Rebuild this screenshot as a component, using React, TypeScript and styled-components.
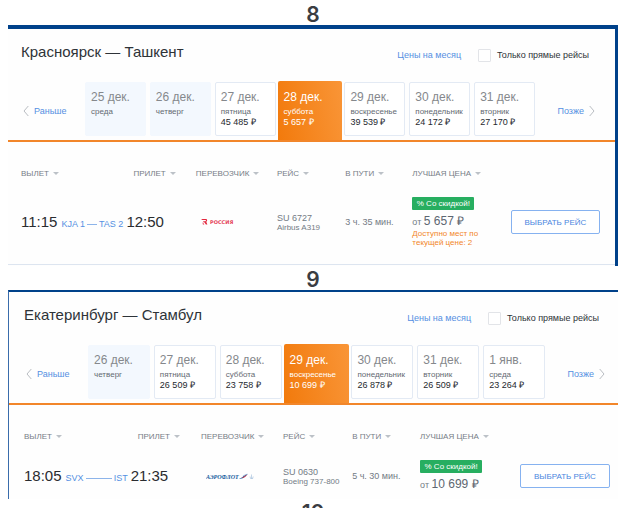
import React from "react";
import styled, { createGlobalStyle, css } from "styled-components";

const GlobalStyle = createGlobalStyle`
  * { box-sizing: border-box; }
  body {
    margin: 0;
    background: #fff;
    font-family: "Liberation Sans", Arial, sans-serif;
    color: #2e3338;
  }
  button { font: inherit; color: inherit; background: none; border: 0; padding: 0; cursor: pointer; }
  a { color: #5590e2; text-decoration: none; }
`;

const Page = styled.main`
  max-height: 100vh;
  overflow: hidden;
  padding: 1px 17px 0 8px;
`;

const Caption = styled.h2`
  margin: 0;
  height: 24px;
  line-height: 28px;
  text-align: center;
  font-family: Inter, sans-serif;
  font-size: 21px;
  font-weight: 600;
  color: #3a3d42;
`;

type Frame = "topRight" | "topLeft";

const Panel = styled.section<{ $frame: Frame }>`
  --start: 13px;
  --end: 15px;
  background: #fefefe;
  border-top: 4px solid #00418a;
  border-right: 3px solid #00418a;
  ${(p) =>
    p.$frame === "topLeft" &&
    css`
      --start: 15px;
      --end: 8px;
      border-top-width: 2px;
      border-right: 0;
      border-left: 1px solid #3a6cab;
    `}
`;

const Header = styled.header`
  display: flex;
  align-items: center;
  height: 52px;
  padding: 0 calc(var(--end) + 11px) 0 var(--start);
`;

const Title = styled.h1`
  flex: 1;
  margin: 0;
  padding-bottom: 6px;
  font-size: 15px;
  line-height: 20px;
  font-weight: 400;
`;

const MonthLink = styled.a`
  font-size: 9px;
  line-height: 14px;
  margin-right: 17px;
`;

const DirectOnly = styled.label`
  display: flex;
  align-items: center;
  gap: 6px;
  font-size: 9px;
  line-height: 14px;
`;

const Checkbox = styled.input`
  appearance: none;
  width: 13px;
  height: 13px;
  margin: 0;
  background: #fff;
  border: 1px solid #e2e4e8;
  border-radius: 1px;
`;

const DateNav = styled.nav`
  display: grid;
  grid-template-columns: 64px 1fr 65px;
  padding: 0 var(--end) 0 var(--start);
  border-bottom: 2px solid #f2862a;
`;

const Step = styled.button<{ $side: "start" | "end" }>`
  display: flex;
  align-items: center;
  justify-content: ${(p) => (p.$side === "start" ? "flex-start" : "flex-end")};
  gap: 5px;
  padding: ${(p) => (p.$side === "start" ? "0 0 0 2px" : "0 5px 0 0")};
  font-size: 9px;
  color: #5590e2;
`;

const Days = styled.div`
  display: flex;
  gap: 4px;
`;

type DayState = "empty" | "priced" | "active";

const dayLook = {
  empty: css`
    background: #f3f8fe;
    border-color: #f3f8fe;
  `,
  priced: css`
    background: #fff;
    border-color: #e3eaf4;
  `,
  active: css`
    flex-basis: 14px;
    height: 59px;
    margin: 0 -2px;
    padding: 8px 0 0 6px;
    color: #fff;
    background: linear-gradient(80deg, #f27a0c, #f99537);
    border-width: 0;
    border-radius: 2px 2px 0 0;
  `,
};

const DayCell = styled.button<{ $state: DayState }>`
  flex: 1 1 10px;
  min-width: 0;
  height: 54px;
  margin-top: 1px;
  margin-bottom: 4px;
  padding: 6px 0 0 5px;
  display: flex;
  flex-direction: column;
  align-items: flex-start;
  text-align: left;
  white-space: nowrap;
  border: 1px solid;
  border-radius: 2px;
  color: #646a72;
  ${(p) => dayLook[p.$state]}
`;

const DayDate = styled.span<{ $active: boolean }>`
  font-size: 12px;
  line-height: 16px;
  color: ${(p) => (p.$active ? "#fff" : "#85888c")};
`;

const Weekday = styled.span`
  font-size: 8px;
  line-height: 12px;
  margin-top: 1px;
`;

const DayPrice = styled.span<{ $active: boolean }>`
  font-size: 9px;
  line-height: 9px;
  color: ${(p) => (p.$active ? "#fff" : "#25292e")};
`;

const Flights = styled.div`
  padding: 26px var(--end) 0 var(--start);
`;

const Table = styled.table`
  width: 100%;
  table-layout: fixed;
  border-collapse: collapse;
`;

const HeadCell = styled.th<{ $width: string; $indent?: boolean }>`
  width: ${(p) => p.$width};
  height: 11px;
  padding: 0 0 0 ${(p) => (p.$indent ? "7px" : "0")};
  text-align: left;
  font-weight: 400;
  line-height: 11px;
`;

const SortButton = styled.button`
  display: flex;
  align-items: center;
  gap: 4px;
  font-size: 8px;
  line-height: 11px;
  color: #767d86;
  white-space: nowrap;
`;

const Caret = styled.span`
  border: solid transparent;
  border-width: 3px 3px 0;
  border-top-color: #bcc1c7;
`;

const Cell = styled.td<{ $compact: boolean }>`
  padding: 18px 0 ${(p) => (p.$compact ? "7px" : "17px")};
  vertical-align: middle;
  white-space: nowrap;
  font-size: 9px;
  line-height: 11px;
  color: #737b85;
`;

const Departure = styled.div`
  display: flex;
  align-items: baseline;
  gap: 4px;
  padding-right: 3px;
`;

const Time = styled.time`
  display: block;
  font-size: 15px;
  line-height: 18px;
  color: #2a2c30;
`;

const Route = styled.a`
  flex: 1;
  display: flex;
  align-items: baseline;
  gap: 2px;
`;

const RouteLine = styled.span`
  flex: 1;
  align-self: center;
  height: 1px;
  background: #8db4ea;
`;

const Logo = styled.svg`
  display: block;
  margin-left: 5px;
`;

const Plane = styled.div`
  font-size: 8px;
  line-height: 8px;
`;

const Badge = styled.span`
  display: block;
  width: 62px;
  height: 13px;
  border-radius: 1px;
  background: #27ae60;
  color: #fff;
  font-size: 8px;
  line-height: 13px;
  text-align: center;
`;

const Fare = styled.div`
  margin-top: 4px;
  line-height: 14px;
`;

const Amount = styled.span`
  font-size: 12px;
  color: #5d6671;
`;

const SeatsLeft = styled.div`
  font-size: 8px;
  line-height: 9px;
  color: #f2862a;
`;

const Choose = styled.button`
  display: block;
  width: 100%;
  height: 24px;
  border: 1px solid #86b2f0;
  border-radius: 2px;
  background: #fff;
  color: #4a86e0;
  font-size: 8px;
`;

const BottomRule = styled.div`
  height: 2px;
  border-top: 1px solid #dde5f0;
`;

const Chevron = ({ dir }: { dir: "left" | "right" }) => (
  <svg width="6" height="12" viewBox="0 0 6 12" fill="none" stroke="#b9bdc2" aria-hidden="true">
    <path d={dir === "left" ? "M5.3 1 1 6l4.3 5" : "M.7 1 5 6 .7 11"} />
  </svg>
);

const RossiyaLogo = () => (
  <Logo width="38" height="8" viewBox="0 0 38 8" role="img" aria-label="Россия">
    <path d="M0 1h5.200c1.400.6 1.200 2.200 0 2.800L6.400 6.600H4.900L3.300 4.300H2.200V3.300H4.400c.8-.2.8-1 0-1.200H1.400z" fill="#e3263d" />
    <path d="M1.500 4.300 3.400 6.600H1.900z" fill="#e3263d" />
    <text x="9" y="6" fontSize="5" fontWeight="700" fontFamily="DejaVu Sans" fill="#e5445a">
      РОССИЯ
    </text>
  </Logo>
);

const AeroflotLogo = () => (
  <Logo width="48" height="9" viewBox="0 0 48 9" role="img" aria-label="Аэрофлот">
    <text x="0" y="6.500" fontSize="6" fontWeight="700" fontStyle="italic" fontFamily="Liberation Serif" fill="#20609f">
      АЭРОФЛОТ
    </text>
    <path d="M33 6.500c3-.3 4-1.800 5-3.200l4-1.500-3 3c-2 1.700-3.500 2.200-6 1.700z" fill="#2a66a8" />
    <path d="M35.500 6c2-.8 3.200-2.300 6-3.500L39 5c-1 .8-2.200 1.100-3.500 1z" fill="#e0353f" />
    <path d="M36.500 3.600 41.500 1.500 38 4z" fill="#b9cfe6" />
    <path d="M45.500 2.500v3.500M44 4.500c0 2.500 3.200 2.500 3.200 0M44.300 6.500h2.800" stroke="#a9c3de" strokeWidth=".7" fill="none" />
  </Logo>
);

interface Day {
  date: string;
  weekday: string;
  price?: string;
  active?: boolean;
}

interface Flight {
  departs: string;
  arrives: string;
  from: string;
  to: string;
  logo: React.ReactNode;
  number: string;
  plane: string;
  duration: string;
  price: string;
  seats?: [string, string];
}

interface Search {
  id: string;
  frame: Frame;
  title: string;
  days: Day[];
  flight: Flight;
}

const searches: Search[] = [
  {
    id: "8",
    frame: "topRight",
    title: "Красноярск — Ташкент",
    days: [
      { date: "25 дек.", weekday: "среда" },
      { date: "26 дек.", weekday: "четверг" },
      { date: "27 дек.", weekday: "пятница", price: "45 485 ₽" },
      { date: "28 дек.", weekday: "суббота", price: "5 657 ₽", active: true },
      { date: "29 дек.", weekday: "воскресенье", price: "39 539 ₽" },
      { date: "30 дек.", weekday: "понедельник", price: "24 172 ₽" },
      { date: "31 дек.", weekday: "вторник", price: "27 170 ₽" },
    ],
    flight: {
      departs: "11:15",
      arrives: "12:50",
      from: "KJA 1",
      to: "TAS 2",
      logo: <RossiyaLogo />,
      number: "SU 6727",
      plane: "Airbus A319",
      duration: "3 ч. 35 мин.",
      price: "5 657 ₽",
      seats: ["Доступно мест по", "текущей цене: 2"],
    },
  },
  {
    id: "9",
    frame: "topLeft",
    title: "Екатеринбург — Стамбул",
    days: [
      { date: "26 дек.", weekday: "четверг" },
      { date: "27 дек.", weekday: "пятница", price: "26 509 ₽" },
      { date: "28 дек.", weekday: "суббота", price: "23 758 ₽" },
      { date: "29 дек.", weekday: "воскресенье", price: "10 699 ₽", active: true },
      { date: "30 дек.", weekday: "понедельник", price: "26 878 ₽" },
      { date: "31 дек.", weekday: "вторник", price: "26 509 ₽" },
      { date: "1 янв.", weekday: "среда", price: "23 264 ₽" },
    ],
    flight: {
      departs: "18:05",
      arrives: "21:35",
      from: "SVX",
      to: "IST",
      logo: <AeroflotLogo />,
      number: "SU 0630",
      plane: "Boeing 737-800",
      duration: "5 ч. 30 мин.",
      price: "10 699 ₽",
    },
  },
];

const columns = [
  { label: "ВЫЛЕТ", width: "18.2%" },
  { label: "ПРИЛЕТ", width: "12%", indent: true },
  { label: "ПЕРЕВОЗЧИК", width: "14%" },
  { label: "РЕЙС", width: "11.8%" },
  { label: "В ПУТИ", width: "11.6%" },
  { label: "ЛУЧШАЯ ЦЕНА", width: "17%" },
];

const SearchPanel = ({ search }: { search: Search }) => {
  const { flight } = search;
  const compact = !flight.seats;
  return (
    <Panel $frame={search.frame}>
      <Header>
        <Title>{search.title}</Title>
        <MonthLink href="#month">Цены на месяц</MonthLink>
        <DirectOnly>
          <Checkbox type="checkbox" />
          Только прямые рейсы
        </DirectOnly>
      </Header>
      <DateNav>
        <Step $side="start">
          <Chevron dir="left" />
          Раньше
        </Step>
        <Days>
          {search.days.map((d) => (
            <DayCell key={d.date} $state={d.active ? "active" : d.price ? "priced" : "empty"}>
              <DayDate $active={!!d.active}>{d.date}</DayDate>
              <Weekday>{d.weekday}</Weekday>
              {d.price && <DayPrice $active={!!d.active}>{d.price}</DayPrice>}
            </DayCell>
          ))}
        </Days>
        <Step $side="end">
          Позже
          <Chevron dir="right" />
        </Step>
      </DateNav>
      <Flights>
        <Table>
          <thead>
            <tr>
              {columns.map((c) => (
                <HeadCell key={c.label} $width={c.width} $indent={c.indent}>
                  <SortButton>
                    {c.label}
                    <Caret />
                  </SortButton>
                </HeadCell>
              ))}
              <HeadCell $width="15.4%" />
            </tr>
          </thead>
          <tbody>
            <tr>
              <Cell $compact={compact}>
                <Departure>
                  <Time>{flight.departs}</Time>
                  <Route href="#route">
                    <span>{flight.from}</span>
                    <RouteLine />
                    <span>{flight.to}</span>
                  </Route>
                </Departure>
              </Cell>
              <Cell $compact={compact}>
                <Time>{flight.arrives}</Time>
              </Cell>
              <Cell $compact={compact}>{flight.logo}</Cell>
              <Cell $compact={compact}>
                {flight.number}
                <Plane>{flight.plane}</Plane>
              </Cell>
              <Cell $compact={compact}>{flight.duration}</Cell>
              <Cell $compact={compact}>
                <Badge>% Со скидкой!</Badge>
                <Fare>
                  от <Amount>{flight.price}</Amount>
                </Fare>
                {flight.seats?.map((line) => (
                  <SeatsLeft key={line}>{line}</SeatsLeft>
                ))}
              </Cell>
              <Cell $compact={compact}>
                <Choose>ВЫБРАТЬ РЕЙС</Choose>
              </Cell>
            </tr>
          </tbody>
        </Table>
      </Flights>
      {!compact && <BottomRule />}
    </Panel>
  );
};

export default function App() {
  return (
    <>
      <GlobalStyle />
      <Page>
        {searches.map((s) => (
          <React.Fragment key={s.id}>
            <Caption>{s.id}</Caption>
            <SearchPanel search={s} />
          </React.Fragment>
        ))}
        <Caption>10</Caption>
      </Page>
    </>
  );
}
